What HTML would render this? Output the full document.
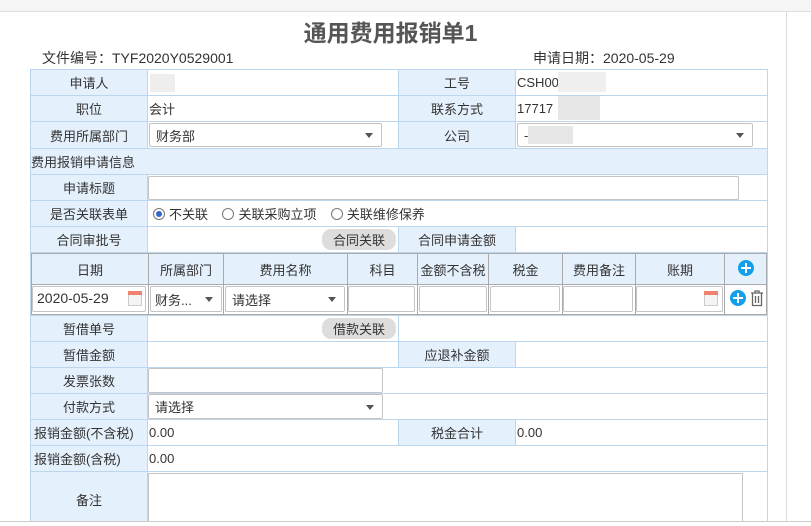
<!DOCTYPE html>
<html><head><meta charset="utf-8"><style>
*{box-sizing:border-box;margin:0;padding:0}
html,body{width:811px;height:526px;overflow:hidden}
body{background:#fff;position:relative;font-family:"Liberation Sans","Noto Sans CJK SC",sans-serif;font-size:13px;color:#333}
.a{position:absolute}
.c{position:absolute;border:1px solid #bcd6ee;background:#fff;display:flex;align-items:center;white-space:nowrap}
.l{background:#e4f0fb;justify-content:center}
.v{padding-left:1px}
.sel{position:absolute;border:1px solid #c4c4c4;border-radius:2px;background:#fff;display:flex;align-items:center;padding-left:6px}
.sel:after{content:"";position:absolute;right:8px;top:50%;margin-top:-2px;border-left:4px solid transparent;border-right:4px solid transparent;border-top:5px solid #555}
.inp{position:absolute;border:1px solid #c4c4c4;background:#fff;border-radius:2px}
.btn{position:absolute;background:#ddd;border-radius:9px;display:flex;align-items:center;justify-content:center;font-size:13px;color:#333}
.g{position:absolute;border:1px solid #aaa;display:flex;align-items:center;justify-content:center;background:#e4f0fb}
.blur{position:absolute;background:#e6e6e6}
.radio{display:inline-block;width:12px;height:12px;border:1px solid #777;border-radius:50%;vertical-align:-2px;margin-right:4px;position:relative;background:#fff}
.radio.on:after{content:"";position:absolute;left:2px;top:2px;width:6px;height:6px;border-radius:50%;background:#2f68c8}
.cal{position:absolute;width:14px;height:15px;border:1px solid #ccc;background:#f4f4f4}
.cal:before{content:"";position:absolute;left:-1px;right:-1px;top:-1px;height:4px;background:#f08070}
.plus{position:absolute;width:16px;height:16px;border-radius:50%;background:#12a0ea}
.plus:before{content:"";position:absolute;left:3px;top:7px;width:10px;height:2px;background:#fff}
.plus:after{content:"";position:absolute;left:7px;top:3px;width:2px;height:10px;background:#fff}
</style></head><body>
<div class="a" style="left:0;top:0;width:811px;height:12px;background:#f5f5f5;border-bottom:1px solid #ddd"></div>
<div class="a" style="left:786px;top:12px;width:1px;height:514px;background:#ddd"></div>
<div class="a" style="left:0;top:521px;width:811px;height:5px;background:#fff;border-top:1px solid #ccc;z-index:5"></div>
<div class="a" style="left:0;width:781px;top:14px;text-align:center;font-size:23px;font-weight:bold;color:#555">通用费用报销单1</div>
<div class="a" style="left:42px;top:48px;font-size:14px">文件编号：TYF2020Y0529001</div>
<div class="a" style="left:533px;top:48px;font-size:14px">申请日期：2020-05-29</div>

<div class="c l" style="left:30px;top:69px;width:118px;height:27px">申请人</div>
<div class="c v" style="left:147px;top:69px;width:252px;height:27px"><div class="blur" style="left:2px;top:4px;width:25px;height:18px;background:#eee"></div></div>
<div class="c l" style="left:398px;top:69px;width:118px;height:27px">工号</div>
<div class="c v" style="left:515px;top:69px;width:253px;height:27px">CSH00<div class="blur" style="left:42px;top:2px;width:48px;height:20px;background:#efefef"></div></div>

<div class="c l" style="left:30px;top:95px;width:118px;height:27px">职位</div>
<div class="c v" style="left:147px;top:95px;width:252px;height:27px">会计</div>
<div class="c l" style="left:398px;top:95px;width:118px;height:27px">联系方式</div>
<div class="c v" style="left:515px;top:95px;width:253px;height:27px">17717<div class="blur" style="left:42px;top:0;width:42px;height:24px"></div></div>

<div class="c l" style="left:30px;top:121px;width:118px;height:28px">费用所属部门</div>
<div class="c" style="left:147px;top:121px;width:252px;height:28px"></div>
<div class="sel" style="left:149px;top:123px;width:233px;height:24px">财务部</div>
<div class="c l" style="left:398px;top:121px;width:118px;height:28px">公司</div>
<div class="c" style="left:515px;top:121px;width:253px;height:28px"></div>
<div class="sel" style="left:517px;top:123px;width:236px;height:24px">-<div class="blur" style="left:10px;top:2px;width:45px;height:18px"></div></div>

<div class="c l" style="left:30px;top:148px;width:738px;height:27px;justify-content:flex-start">费用报销申请信息</div>

<div class="c l" style="left:30px;top:174px;width:118px;height:27px">申请标题</div>
<div class="c" style="left:147px;top:174px;width:621px;height:27px"></div>
<div class="inp" style="left:148px;top:176px;width:591px;height:24px"></div>

<div class="c l" style="left:30px;top:200px;width:118px;height:27px">是否关联表单</div>
<div class="c" style="left:147px;top:200px;width:621px;height:27px;padding-left:5px"><span class="radio on"></span>不关联&nbsp;&nbsp;&nbsp;&nbsp;<span class="radio"></span>关联采购立项&nbsp;&nbsp;&nbsp;&nbsp;<span class="radio"></span>关联维修保养</div>

<div class="c l" style="left:30px;top:226px;width:118px;height:27px">合同审批号</div>
<div class="c" style="left:147px;top:226px;width:252px;height:27px"></div>
<div class="btn" style="left:322px;top:229px;width:74px;height:21px">合同关联</div>
<div class="c l" style="left:398px;top:226px;width:118px;height:27px">合同申请金额</div>
<div class="c" style="left:515px;top:226px;width:253px;height:27px"></div>

<div class="a" style="left:30px;top:252px;width:738px;height:64px;border:2px solid #bcd6ee;background:#fff"></div>
<div class="g" style="left:31px;top:253px;width:118px;height:32px">日期</div>
<div class="g" style="left:148px;top:253px;width:76px;height:32px">所属部门</div>
<div class="g" style="left:223px;top:253px;width:125px;height:32px">费用名称</div>
<div class="g" style="left:347px;top:253px;width:71px;height:32px">科目</div>
<div class="g" style="left:417px;top:253px;width:72px;height:32px">金额不含税</div>
<div class="g" style="left:488px;top:253px;width:75px;height:32px">税金</div>
<div class="g" style="left:562px;top:253px;width:74px;height:32px">费用备注</div>
<div class="g" style="left:635px;top:253px;width:90px;height:32px">账期</div>
<div class="g" style="left:724px;top:253px;width:43px;height:32px"></div>
<div class="plus" style="left:738px;top:260px"></div>
<div class="g" style="left:31px;top:284px;width:118px;height:31px;background:#fff"></div>
<div class="g" style="left:148px;top:284px;width:76px;height:31px;background:#fff"></div>
<div class="g" style="left:223px;top:284px;width:125px;height:31px;background:#fff"></div>
<div class="g" style="left:347px;top:284px;width:71px;height:31px;background:#fff"></div>
<div class="g" style="left:417px;top:284px;width:72px;height:31px;background:#fff"></div>
<div class="g" style="left:488px;top:284px;width:75px;height:31px;background:#fff"></div>
<div class="g" style="left:562px;top:284px;width:74px;height:31px;background:#fff"></div>
<div class="g" style="left:635px;top:284px;width:90px;height:31px;background:#fff"></div>
<div class="g" style="left:724px;top:284px;width:43px;height:31px;background:#fff"></div>
<div class="inp" style="left:32px;top:286px;width:114px;height:26px;padding:3px 0 0 4px;font-size:14px">2020-05-29</div>
<div class="cal" style="left:128px;top:291px"></div>
<div class="sel" style="left:150px;top:286px;width:72px;height:26px;padding-left:4px">财务...</div>
<div class="sel" style="left:225px;top:286px;width:120px;height:26px;padding-left:6px">请选择</div>
<div class="inp" style="left:348px;top:286px;width:67px;height:26px"></div>
<div class="inp" style="left:419px;top:286px;width:68px;height:26px"></div>
<div class="inp" style="left:490px;top:286px;width:70px;height:26px"></div>
<div class="inp" style="left:563px;top:286px;width:70px;height:26px"></div>
<div class="inp" style="left:636px;top:286px;width:87px;height:26px"></div>
<div class="cal" style="left:704px;top:291px"></div>
<div class="plus" style="left:730px;top:290px"></div>
<svg class="a" style="left:750px;top:290px" width="14" height="17" viewBox="0 0 14 17"><path d="M1 3h12M5 3V1h4v2M2.5 3.5v12h9v-12M5.5 6v7M8.5 6v7" fill="none" stroke="#666" stroke-width="1.3"/></svg>

<div class="c l" style="left:30px;top:315px;width:118px;height:27px">暂借单号</div>
<div class="c" style="left:147px;top:315px;width:252px;height:27px"></div>
<div class="btn" style="left:322px;top:318px;width:74px;height:21px">借款关联</div>
<div class="c" style="left:398px;top:315px;width:370px;height:27px"></div>

<div class="c l" style="left:30px;top:341px;width:118px;height:27px">暂借金额</div>
<div class="c" style="left:147px;top:341px;width:252px;height:27px"></div>
<div class="c l" style="left:398px;top:341px;width:118px;height:27px">应退补金额</div>
<div class="c" style="left:515px;top:341px;width:253px;height:27px"></div>

<div class="c l" style="left:30px;top:367px;width:118px;height:27px">发票张数</div>
<div class="c" style="left:147px;top:367px;width:621px;height:27px"></div>
<div class="inp" style="left:148px;top:368px;width:235px;height:25px"></div>

<div class="c l" style="left:30px;top:393px;width:118px;height:27px">付款方式</div>
<div class="c" style="left:147px;top:393px;width:621px;height:27px"></div>
<div class="sel" style="left:148px;top:394px;width:235px;height:25px">请选择</div>

<div class="c l" style="left:30px;top:419px;width:118px;height:27px;justify-content:flex-start;padding-left:3px">报销金额(不含税)</div>
<div class="c v" style="left:147px;top:419px;width:252px;height:27px">0.00</div>
<div class="c l" style="left:398px;top:419px;width:118px;height:27px">税金合计</div>
<div class="c v" style="left:515px;top:419px;width:253px;height:27px">0.00</div>

<div class="c l" style="left:30px;top:445px;width:118px;height:27px;justify-content:flex-start;padding-left:3px">报销金额(含税)</div>
<div class="c v" style="left:147px;top:445px;width:621px;height:27px">0.00</div>

<div class="c l" style="left:30px;top:471px;width:118px;height:55px;border-bottom:none">备注</div>
<div class="c" style="left:147px;top:471px;width:621px;height:55px;border-bottom:none"></div>
<div class="inp" style="left:148px;top:473px;width:595px;height:53px;border-radius:0;border-bottom:none"></div>
</body></html>
